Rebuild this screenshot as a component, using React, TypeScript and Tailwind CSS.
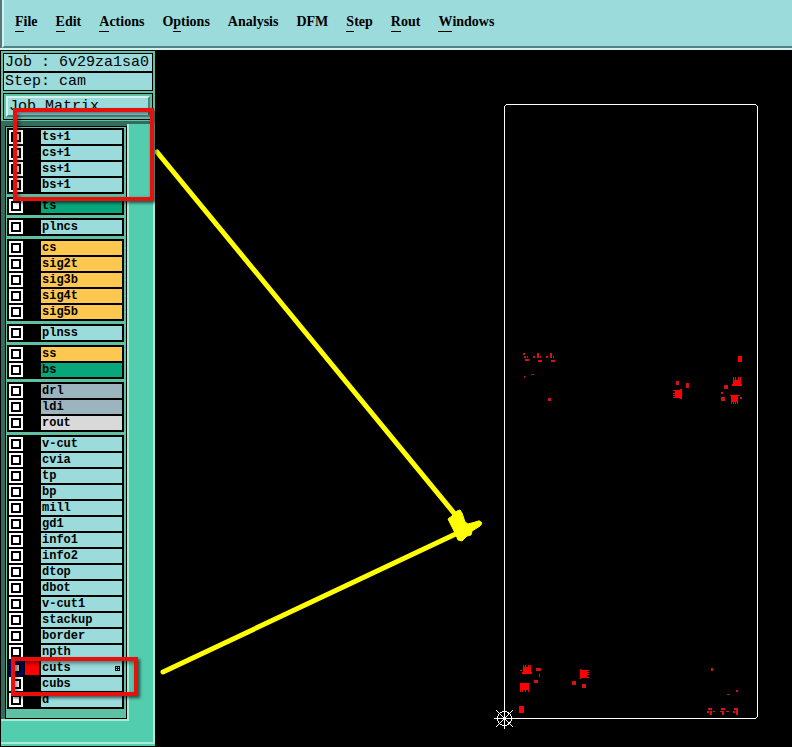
const menuItems = [
  { label: "File", key: 0 },
  { label: "Edit", key: 0 },
  { label: "Actions", key: 0 },
  { label: "Options", key: 1 },
  { label: "Analysis", key: -1 },
  { label: "DFM", key: -1 },
  { label: "Step", key: 0 },
  { label: "Rout", key: 0 },
  { label: "Windows", key: 0 },
];

const layerGroups = [
  { color: "bg-[#9bdbdb]", layers: ["ts+1", "cs+1", "ss+1", "bs+1"] },
  { color: "bg-[#07a67b]", layers: ["ts"] },
  { color: "bg-[#9bdbdb]", layers: ["plncs"] },
  { color: "bg-[#fec74f]", layers: ["cs", "sig2t", "sig3b", "sig4t", "sig5b"] },
  { color: "bg-[#9bdbdb]", layers: ["plnss"] },
  { color: "bg-[#fec74f]", layers: ["ss", "bs"] },
  { color: "bg-[#9bb4be]", layers: ["drl", "ldi", "rout"] },
  {
    color: "bg-[#9bdbdb]",
    layers: [
      "v-cut", "cvia", "tp", "bp", "mill", "gd1", "info1", "info2", "dtop",
      "dbot", "v-cut1", "stackup", "border", "npth", "cuts", "cubs", "d",
    ],
  },
];

// layers that do not share the colour of their group
const layerColors: Record<string, string> = {
  bs: "bg-[#07a67b]",
  rout: "bg-[#d9d9d9]",
};

// x, y, width, height of the cut features
const brightCuts = [
  [738, 356, 4, 6],
  [733, 380, 8, 5], [732, 384, 10, 2], [733, 377, 1, 3], [735, 377, 1, 3], [738, 377, 1, 3], [740, 377, 1, 3],
  [730, 395, 10, 1], [731, 396, 7, 6], [731, 402, 1, 2], [733, 402, 1, 2], [735, 402, 1, 2], [737, 402, 1, 2],
  [675, 390, 7, 8], [680, 389, 2, 10], [673, 390, 2, 1], [673, 393, 2, 1], [673, 395, 2, 1], [673, 397, 2, 1],
  [523, 667, 8, 6], [522, 672, 10, 2], [523, 665, 1, 2], [525, 665, 1, 2], [528, 665, 1, 2], [530, 665, 1, 2],
  [520, 683, 9, 7], [520, 690, 1, 2], [522, 690, 1, 2], [525, 690, 1, 2], [528, 690, 1, 2],
  [580, 670, 7, 8], [580, 669, 1, 10], [587, 670, 2, 1], [587, 672, 2, 1], [587, 674, 2, 1], [587, 677, 2, 1],
  [519, 706, 5, 7],
];

const dimCuts = [
  [523, 353, 2, 2], [524, 356, 2, 2], [527, 356, 1, 2], [525, 359, 4, 2],
  [533, 356, 2, 2], [537, 353, 2, 5], [540, 356, 1, 2], [538, 360, 4, 2],
  [546, 356, 2, 2], [550, 353, 2, 5], [553, 356, 1, 2], [551, 360, 4, 2],
  [531, 374, 3, 1], [524, 376, 1, 2], [548, 398, 3, 3],
  [676, 381, 3, 4], [686, 383, 3, 5],
  [724, 385, 4, 4], [721, 392, 2, 2], [721, 397, 4, 4], [740, 397, 2, 2],
  [536, 668, 5, 3], [539, 674, 1, 3], [534, 680, 4, 3], [520, 670, 2, 1],
  [572, 681, 4, 4], [582, 684, 4, 4],
  [711, 668, 2, 3], [736, 690, 2, 2], [727, 694, 3, 1],
  [708, 708, 4, 2], [707, 711, 2, 2], [710, 711, 2, 4], [713, 711, 2, 1],
  [721, 708, 4, 2], [720, 711, 2, 1], [722, 711, 2, 4], [726, 711, 3, 1],
  [734, 708, 4, 2], [733, 711, 2, 2], [736, 710, 2, 5],
];

function MenuBar() {
  return (
    <nav className="flex h-[50px] border-b-2 border-[#d3f1ef] bg-[#55777a] pl-[2px]">
      <div className="flex flex-1 gap-[18px] border-b-2 border-l-2 border-b-[#4f8283] border-l-[#d3f1ef] bg-[#9bdbdb] pt-[12px] pl-[11px] font-['Liberation_Serif',serif] text-[14px] leading-[20px] font-bold text-black">
        {menuItems.map(({ label, key }) => (
          <button key={label} className="h-[20px]">
            {label.slice(0, Math.max(key, 0))}
            {key >= 0 && <span className="inline-block border-b border-black leading-[18px]">{label[key]}</span>}
            {label.slice(key + 1)}
          </button>
        ))}
      </div>
    </nav>
  );
}

function LayerRow({ name, color }: { name: string; color: string }) {
  const active = name === "cuts";
  return (
    <div className="flex h-[14px]">
      <input
        id={`layer-${name}`}
        type="checkbox"
        defaultChecked={active}
        className="h-[14px] w-[14px] shrink-0 appearance-none border-2 border-white bg-white shadow-[inset_0_0_0_2px_#000] checked:border-[#00007d] checked:bg-[#c8c8c8]"
      />
      <span className={`mx-[2px] w-[14px] ${active ? "bg-[#ff0000]" : "bg-black"}`} />
      <label
        htmlFor={`layer-${name}`}
        className={`flex flex-1 items-center justify-between px-px text-[12px] leading-[14px] font-bold text-black ${color}`}
      >
        {name}
        {active && (
          <svg viewBox="0 0 5 5" className="mr-px h-[5px] w-[5px]" shapeRendering="crispEdges">
            <path d="M0 0h5v5h-5z" fill="#000" />
            <path d="M1 1h1v1h-1zM3 1h1v1h-1zM1 3h1v1h-1zM3 3h1v1h-1z" fill="#9bdbdb" />
          </svg>
        )}
      </label>
    </div>
  );
}

function Sidebar() {
  return (
    <aside className="relative w-[155px] shrink-0 border-l border-black bg-[#52ceae] font-['Liberation_Mono',monospace]">
      <div className="border-t border-black bg-[#5fc0a4] px-[2px] pt-[2px] pb-px text-black">
        <div className="border border-black bg-[#9bdbdb] pb-px text-[15px] leading-[18px] whitespace-pre">
          <div className="h-[19px] border-b-2 border-black pl-px">Job : 6v29za1sa0</div>
          <div className="h-[16px] pl-px">Step: cam</div>
        </div>
        <div className="mt-[2px] border border-black px-[2px] pt-[2px] pb-[2px]">
          <button className="block h-[21px] w-full border-t-2 border-r-2 border-b-2 border-l-2 border-t-[#d3f1ef] border-r-[#4f8283] border-b-[#4f8283] border-l-[#d3f1ef] bg-[#9bdbdb] pl-px text-left text-[15px] leading-[17px]">
            Job Matrix
          </button>
        </div>
      </div>

      <div className="border-t-[3px] border-r-2 border-t-[#356b5f] border-r-[#a8ebd6]">
        <div className="w-[128px] border-r-2 border-b-2 border-[#a8ebd6] bg-[#356b5f] pt-[2px] pl-[4px]">
          <div className="space-y-[3px] border border-black bg-[#5fc0a4] pt-px pr-[2px] pb-[9px] pl-px">
            {layerGroups.map((group) => (
              <div key={group.layers[0]} className="space-y-[2px] border-2 border-black bg-black">
                {group.layers.map((name) => (
                  <LayerRow key={name} name={name} color={layerColors[name] ?? group.color} />
                ))}
              </div>
            ))}
          </div>
        </div>
        <div className="h-[21px]" />
      </div>
      <div className="border-t-2 border-b border-t-[#a8ebd6] border-b-black pt-[2px]" />

      {/* Marked layers */}
      <div className="pointer-events-none absolute top-[58px] left-[12px] h-[93px] w-[141px] border-4 border-[#e8100c] shadow-[2px_2px_3px_rgba(0,0,0,0.6),inset_2px_2px_4px_rgba(0,0,0,0.5)]" />
      <div className="pointer-events-none absolute top-[607px] left-[10px] h-[39px] w-[127px] border-4 border-[#e8100c] shadow-[2px_2px_3px_rgba(0,0,0,0.6),inset_2px_2px_4px_rgba(0,0,0,0.5)]" />
    </aside>
  );
}

function Board() {
  return (
    <svg viewBox="155 50 637 697" className="block h-auto w-full">
      <path
        d="M506.500 104.500H755.500L757.500 106.500V716.500L755.500 718.500H504.500V106.500Z"
        fill="none"
        stroke="#fff"
        shapeRendering="crispEdges"
      />

      <g fill="#ff0000" shapeRendering="crispEdges">
        {brightCuts.map(([x, y, w, h]) => (
          <rect key={`${x}-${y}`} x={x} y={y} width={w} height={h} />
        ))}
      </g>
      <g fill="#d51218" shapeRendering="crispEdges">
        {dimCuts.map(([x, y, w, h]) => (
          <rect key={`${x}-${y}`} x={x} y={y} width={w} height={h} />
        ))}
      </g>

      {/* Origin marker */}
      <g fill="none" stroke="#fff" shapeRendering="crispEdges">
        <circle cx="504.500" cy="718.500" r="7" />
        <path d="M494 718.500H515M504.500 708V729M496 710L513 727M513 710L496 727" />
        <circle cx="504.500" cy="718.500" r="1.500" fill="#fff" />
      </g>

      {/* Arrows from the marked layers */}
      <g stroke="#ffff00" strokeWidth="5" strokeLinecap="round" fill="none">
        <path d="M157 152L463 524" />
        <path d="M163 672L479 523" />
      </g>
      <path
        d="M448 519L452 516L457 511L460 510L462 513L465 522L468 524L479 521L482 523L480 526L472 531L471 535L467 536L462 541L458 540L456 535Z"
        fill="#ffff00"
        stroke="#ffff00"
        strokeLinejoin="round"
      />
    </svg>
  );
}

export default function App() {
  return (
    <div className="min-h-screen bg-black">
      <MenuBar />
      <div className="flex items-start">
        <Sidebar />
        <main className="min-w-0 flex-1">
          <Board />
        </main>
      </div>
    </div>
  );
}
